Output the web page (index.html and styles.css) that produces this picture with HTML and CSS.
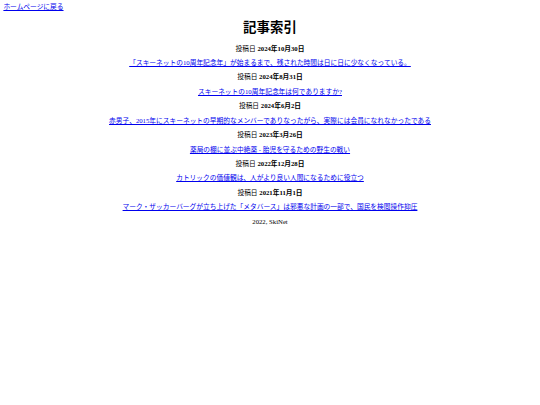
FILE: index.html
```html
<!DOCTYPE html>
<html lang="ja">
<head>
<meta charset="utf-8">
<title>記事索引</title>
<link rel="stylesheet" href="styles.css">
</head>
<body class="page">
<a class="home" href="#">ホームページに戻る</a>
<h1 class="title">記事索引</h1>
<p class="date">投稿日 <b>2024年10月30日</b></p>
<p class="entry"><a href="#">「スキーネットの10周年記念年」が始まるまで、残された時間は日に日に少なくなっている。</a></p>
<p class="date">投稿日 <b>2024年8月31日</b></p>
<p class="entry"><a href="#">スキーネットの10周年記念年は何でありますか?</a></p>
<p class="date">投稿日 <b>2024年6月2日</b></p>
<p class="entry"><a href="#">赤男子、2015年にスキーネットの早期的なメンバーでありなったがら、実際には会員になれなかったである</a></p>
<p class="date">投稿日 <b>2023年3月26日</b></p>
<p class="entry"><a href="#">薬局の棚に並ぶ中絶薬 - 胎児を守るための野生の戦い</a></p>
<p class="date">投稿日 <b>2022年12月28日</b></p>
<p class="entry"><a href="#">カトリックの価値観は、人がより良い人間になるために役立つ</a></p>
<p class="date">投稿日 <b>2021年11月1日</b></p>
<p class="entry"><a href="#">マーク・ザッカーバーグが立ち上げた「メタバース」は邪悪な計画の一部で、国民を検閲操作抑圧</a></p>
<p class="footer">2022, SkiNet</p>
</body>
</html>
```

FILE: styles.css
```css
html {
  background: #ffffff;
}
.page {
  margin: 3.4px;
  font-family: "Liberation Serif", "Noto Sans CJK JP", serif;
  font-size: 6.72px;
  line-height: 7.7px;
  color: #000000;
}
.page a {
  color: #0000ee;
}
.home {
  display: inline;
}
.title {
  text-align: center;
  font-size: 13.44px;
  line-height: 15.5px;
  margin: 9px 0;
  font-weight: bold;
}
.date,
.entry,
.footer {
  text-align: center;
  margin: 6.72px 0;
}
```
